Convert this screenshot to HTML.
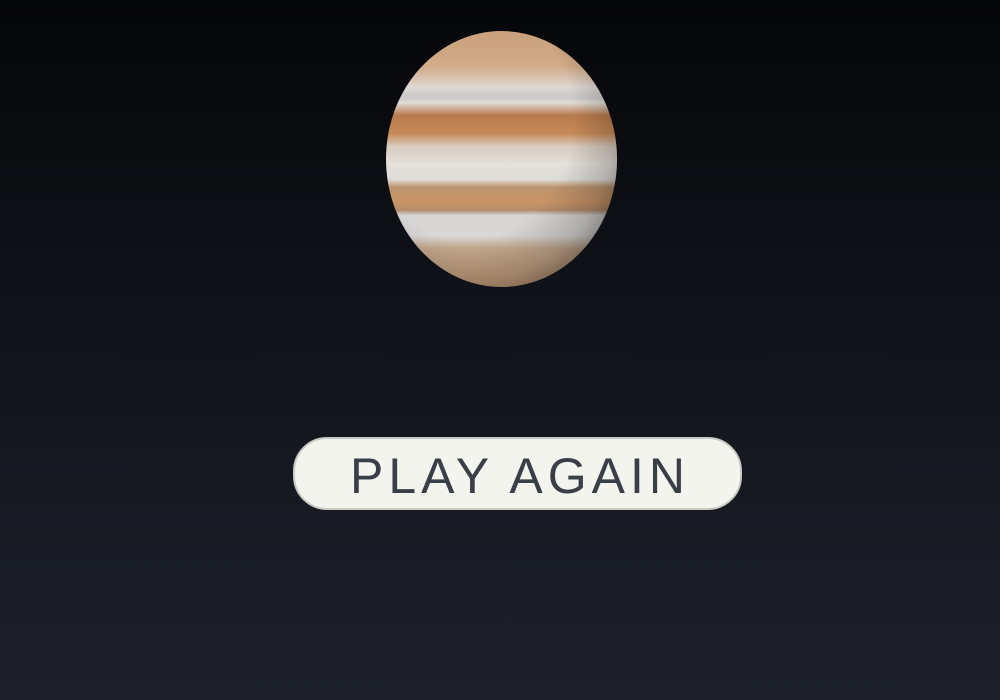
<!DOCTYPE html>
<html><head><style>
html,body{margin:0;padding:0}
body{width:1000px;height:700px;overflow:hidden;background:linear-gradient(#050608 0%,#0f1218 40%,#1d2029 100%);position:relative;font-family:"Liberation Sans",sans-serif}
.planet{position:absolute;left:386px;top:31px;width:231px;height:256px;border-radius:50%;overflow:hidden;
background:linear-gradient(180deg,#c9a07c 0%,#d2ab88 14%,#dcd8d2 22%,#c9c7c8 26%,#e0dcd6 28%,#b87a4c 33%,#c78a58 40%,#d8cbbf 45%,#e4e0da 52%,#dedcd9 58%,#bd946d 61%,#c99466 67%,#b48c6d 70%,#d7d5d3 72%,#d9d8d7 80%,#c8ab8f 85%,#c29b78 100%)}
.planet::after{content:"";position:absolute;inset:0;border-radius:50%;
background:radial-gradient(ellipse at 35% 35%,rgba(0,0,0,0) 50%,rgba(0,0,0,.2) 70%,rgba(0,0,0,.6) 90%,rgba(0,0,0,.85) 100%)}
.btn{position:absolute;left:293px;top:437px;width:449px;height:73px;box-sizing:border-box;border-radius:34px;background:#f4f4ee;border:2px solid #c9cac4;
display:flex;align-items:center;justify-content:center;color:#3a3f47;font-size:50px;letter-spacing:5px;padding-top:4px;padding-left:5px}
</style></head><body>
<div class="planet"></div>
<div class="btn">PLAY AGAIN</div>
</body></html>
